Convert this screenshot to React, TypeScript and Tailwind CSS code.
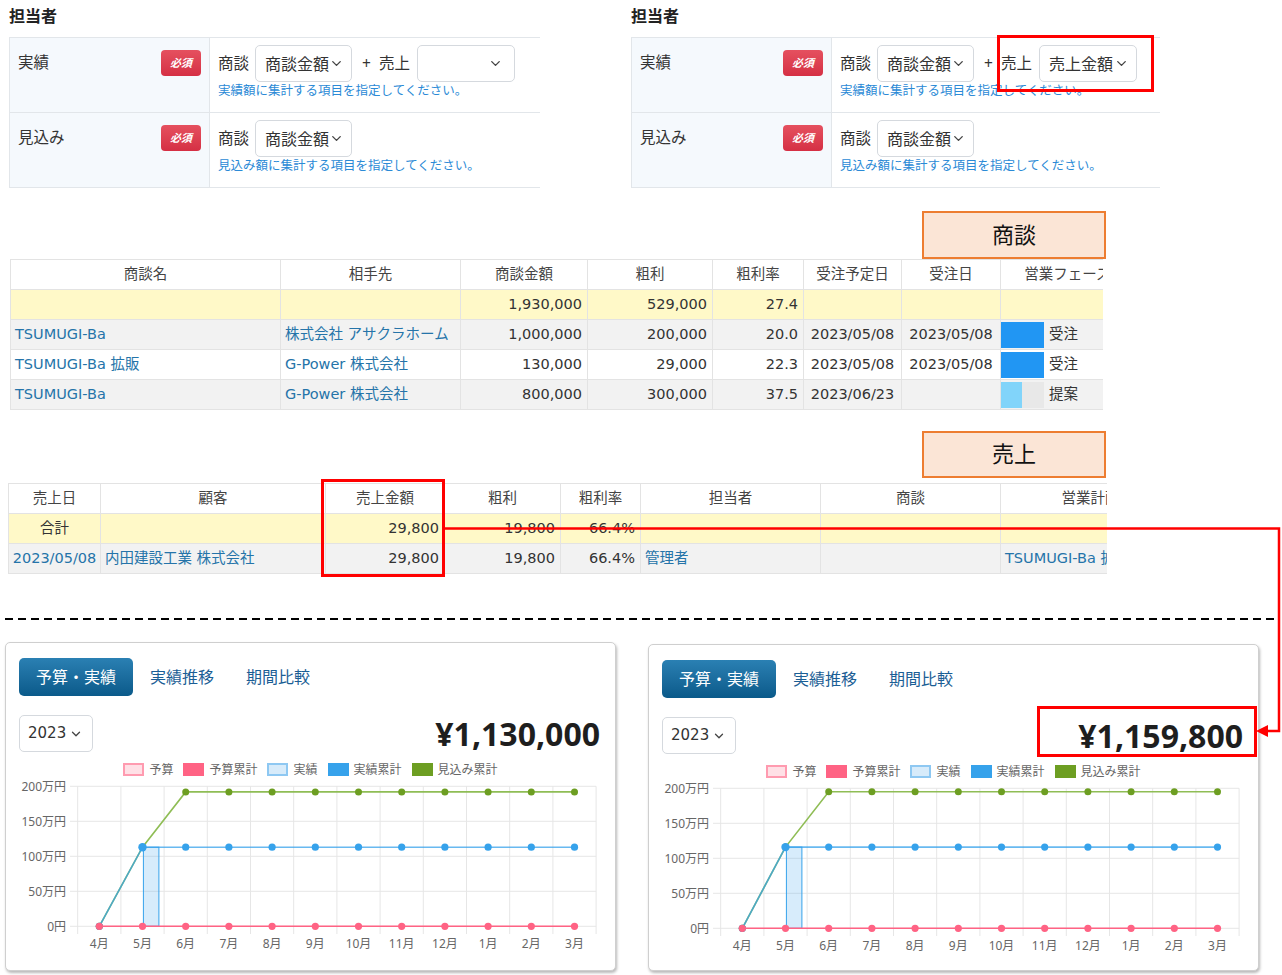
import React from 'react'
import { ChevronDown } from 'lucide-react'

type Cell = {
  text?: string
  link?: boolean
  align?: 'l' | 'r' | 'c'
  phase?: { label: string; full: boolean }
}

const alignClass = {
  l: 'justify-start pl-[4px]',
  r: 'justify-end pr-[5px]',
  c: 'justify-center',
}

const months = ['4月', '5月', '6月', '7月', '8月', '9月', '10月', '11月', '12月', '1月', '2月', '3月']

// ---------- 担当者 settings ----------

function Dropdown({ value, className }: { value?: string; className: string }) {
  return (
    <div
      className={`flex h-[37px] items-center rounded-[5px] border border-[#d5d9de] bg-white ${
        value ? 'justify-between pl-[9px] pr-[7px]' : 'justify-end pr-[11px]'
      } ${className}`}
    >
      {value && <span className="text-[16px] text-[#333]">{value}</span>}
      <ChevronDown size={15} strokeWidth={2.2} className="text-[#444]" />
    </div>
  )
}

function Required() {
  return (
    <span className="flex h-[26px] w-[40px] items-center justify-center rounded-[4px] bg-linear-to-b from-[#e5505f] to-[#d52f44] text-[11px] font-bold italic text-white">
      必須
    </span>
  )
}

function SettingRow({ label, help, children }: { label: string; help: string; children: React.ReactNode }) {
  return (
    <div className="flex h-[75px] border-b border-[#e2e6ea]">
      <div className="w-[200px] shrink-0 border-r border-[#e2e6ea] bg-[#f5f9fd] pl-[8px] pr-[8px] pt-[12px]">
        <div className="flex h-[26px] items-center justify-between">
          <span className="text-[15.5px] text-[#333]">{label}</span>
          <Required />
        </div>
      </div>
      <div className="flex-1 pl-[8px] pt-[7px]">
        <div className="flex h-[37px] items-center text-[15.5px] text-[#333]">{children}</div>
        <div className="mt-[1px] text-[12.5px] leading-[16px] text-[#2b8ad6]">{help}</div>
      </div>
    </div>
  )
}

function AssignPanel({ sales, className }: { sales?: string; className: string }) {
  return (
    <div className={className}>
      <div className="h-[20px] text-[16px] font-bold leading-[20px] text-[#222]">担当者</div>
      <div className="mt-[11px] border-l border-t border-[#e2e6ea]">
        <SettingRow label="実績" help="実績額に集計する項目を指定してください。">
          <span>商談</span>
          <Dropdown value="商談金額" className="ml-[6px] w-[97px]" />
          <span className="ml-[10px]">+</span>
          <span className="ml-[8px]">売上</span>
          <Dropdown value={sales} className="ml-[7px] w-[98px]" />
        </SettingRow>
        <SettingRow label="見込み" help="見込み額に集計する項目を指定してください。">
          <span>商談</span>
          <Dropdown value="商談金額" className="ml-[6px] w-[97px]" />
        </SettingRow>
      </div>
    </div>
  )
}

// ---------- tables ----------

function TagBox({ label, className }: { label: string; className: string }) {
  return (
    <div
      className={`flex w-[184px] items-center justify-center border-2 border-[#ed7d31] bg-[#fbe5d6] pb-[4px] font-['Noto_Sans_CJK_JP',sans-serif] text-[22px] text-[#111] ${className}`}
    >
      {label}
    </div>
  )
}

function DataTable({
  widths,
  header,
  rows,
  className,
}: {
  widths: string[]
  header: string[]
  rows: { bg: string; cells: Cell[] }[]
  className: string
}) {
  return (
    <div
      className={`overflow-hidden border-l border-t border-[#e3e3e3] font-['DejaVu_Sans','Noto_Sans_CJK_JP',sans-serif] text-[14.5px] ${className}`}
    >
      <div className="flex h-[30px] border-b border-[#e3e3e3] bg-white text-[#444]">
        {header.map((h, i) => (
          <div
            key={i}
            className={`flex shrink-0 items-center justify-center whitespace-nowrap border-r border-[#e3e3e3] ${widths[i]}`}
          >
            {h}
          </div>
        ))}
      </div>
      {rows.map((r, ri) => (
        <div key={ri} className={`flex h-[30px] border-b border-[#e3e3e3] ${r.bg}`}>
          {r.cells.map((c, i) => (
            <div
              key={i}
              className={`flex shrink-0 items-center overflow-hidden whitespace-nowrap border-r border-[#e3e3e3] ${
                c.phase ? 'pl-0' : alignClass[c.align ?? 'l']
              } ${widths[i]} ${c.link ? 'text-[#2574a9]' : 'text-[#333]'}`}
            >
              {c.phase ? (
                <div className="flex items-center">
                  <div className="h-[26px] w-[43px] bg-[#e8e8e8]">
                    <div className={c.phase.full ? 'h-full w-full bg-[#2196f3]' : 'h-full w-[21px] bg-[#81d4fa]'} />
                  </div>
                  <span className="ml-[5px] text-[#333]">{c.phase.label}</span>
                </div>
              ) : (
                c.text
              )}
            </div>
          ))}
        </div>
      ))}
    </div>
  )
}

const dealWidths = ['w-[270px]', 'w-[180px]', 'w-[127px]', 'w-[125px]', 'w-[91px]', 'w-[98px]', 'w-[99px]', 'w-[134px]']
const dealHeader = ['商談名', '相手先', '商談金額', '粗利', '粗利率', '受注予定日', '受注日', '営業フェーズ']
const dealRows = [
  {
    bg: 'bg-[#fff9c8]',
    cells: [{}, {}, { text: '1,930,000', align: 'r' }, { text: '529,000', align: 'r' }, { text: '27.4', align: 'r' }, {}, {}, {}] as Cell[],
  },
  {
    bg: 'bg-[#f2f2f2]',
    cells: [
      { text: 'TSUMUGI-Ba', link: true },
      { text: '株式会社 アサクラホーム', link: true },
      { text: '1,000,000', align: 'r' },
      { text: '200,000', align: 'r' },
      { text: '20.0', align: 'r' },
      { text: '2023/05/08', align: 'c' },
      { text: '2023/05/08', align: 'c' },
      { phase: { label: '受注', full: true } },
    ] as Cell[],
  },
  {
    bg: 'bg-white',
    cells: [
      { text: 'TSUMUGI-Ba 拡販', link: true },
      { text: 'G-Power 株式会社', link: true },
      { text: '130,000', align: 'r' },
      { text: '29,000', align: 'r' },
      { text: '22.3', align: 'r' },
      { text: '2023/05/08', align: 'c' },
      { text: '2023/05/08', align: 'c' },
      { phase: { label: '受注', full: true } },
    ] as Cell[],
  },
  {
    bg: 'bg-[#f2f2f2]',
    cells: [
      { text: 'TSUMUGI-Ba', link: true },
      { text: 'G-Power 株式会社', link: true },
      { text: '800,000', align: 'r' },
      { text: '300,000', align: 'r' },
      { text: '37.5', align: 'r' },
      { text: '2023/06/23', align: 'c' },
      {},
      { phase: { label: '提案', full: false } },
    ] as Cell[],
  },
]

const salesWidths = ['w-[92px]', 'w-[225px]', 'w-[119px]', 'w-[116px]', 'w-[80px]', 'w-[180px]', 'w-[180px]', 'w-[180px]']
const salesHeader = ['売上日', '顧客', '売上金額', '粗利', '粗利率', '担当者', '商談', '営業計画']
const salesRows = [
  {
    bg: 'bg-[#fff9c8]',
    cells: [
      { text: '合計', align: 'c' },
      {},
      { text: '29,800', align: 'r' },
      { text: '19,800', align: 'r' },
      { text: '66.4%', align: 'r' },
      {},
      {},
      {},
    ] as Cell[],
  },
  {
    bg: 'bg-[#f2f2f2]',
    cells: [
      { text: '2023/05/08', link: true, align: 'c' },
      { text: '内田建設工業 株式会社', link: true },
      { text: '29,800', align: 'r' },
      { text: '19,800', align: 'r' },
      { text: '66.4%', align: 'r' },
      { text: '管理者', link: true },
      {},
      { text: 'TSUMUGI-Ba 拡販', link: true },
    ] as Cell[],
  },
]

// ---------- chart card ----------

function Chart({ actual, forecast }: { actual: number; forecast: number }) {
  const x0 = 77.7
  const cw = 43.2
  const xr = x0 + cw * 12
  const cx = (i: number) => x0 + cw * (i + 0.5)
  const vy = (v: number) => 927.3 - v * 0.7
  const pink = months.map((_, i) => [cx(i), vy(0)])
  const blue = months.map((_, i) => [cx(i), vy(i === 0 ? 0 : actual)])
  const green = months.map((_, i) => [cx(i), vy(i === 0 ? 0 : i === 1 ? actual : forecast)])
  const pts = (a: number[][]) => a.map((p) => p.join(',')).join(' ')
  const font = 'Noto Sans, Noto Sans CJK JP, sans-serif'

  return (
    <svg width={609} height={175} viewBox="6 780 609 175" className="mt-[1px] block">
      {[0, 50, 100, 150, 200].map((v) => (
        <g key={v}>
          <line x1={70} x2={xr} y1={vy(v)} y2={vy(v)} stroke="#e6e6e6" strokeWidth={1} />
          <text x={66} y={vy(v) + 4.5} textAnchor="end" fontSize={12} fill="#666" fontFamily={font}>
            {v === 0 ? '0円' : `${v}万円`}
          </text>
        </g>
      ))}
      {Array.from({ length: 13 }).map((_, i) => (
        <line key={i} x1={x0 + cw * i} x2={x0 + cw * i} y1={vy(200)} y2={935} stroke="#e6e6e6" strokeWidth={1} />
      ))}
      {months.map((m, i) => (
        <text key={m} x={cx(i)} y={948.5} textAnchor="middle" fontSize={12} fill="#666" fontFamily={font}>
          {m}
        </text>
      ))}
      <rect
        x={cx(1) + 0.9}
        y={vy(actual)}
        width={15.5}
        height={vy(0) - vy(actual)}
        fill="rgba(54,162,235,0.2)"
        stroke="#36a2eb"
        strokeWidth={1}
      />
      <polyline points={pts(green)} fill="none" stroke="#8fbd55" strokeWidth={1.6} />
      {green.map((p, i) => (
        <circle key={i} cx={p[0]} cy={p[1]} r={3.5} fill="#6d9e22" />
      ))}
      <polyline points={pts(blue)} fill="none" stroke="#36a2eb" strokeOpacity={0.75} strokeWidth={1.6} />
      {blue.map((p, i) => (
        <circle key={i} cx={p[0]} cy={p[1]} r={i === 1 ? 4.2 : 3.6} fill="#36a2eb" />
      ))}
      <polyline points={pts(pink)} fill="none" stroke="#ff6384" strokeWidth={1.6} />
      {pink.map((p, i) => (
        <circle key={i} cx={p[0]} cy={p[1]} r={3.6} fill="#ff6384" />
      ))}
    </svg>
  )
}

const legend = [
  { label: '予算', sw: 'bg-[#ffe0e6] border-2 border-[#ff9bb0]' },
  { label: '予算累計', sw: 'bg-[#ff6384]' },
  { label: '実績', sw: 'bg-[#d7ebfa] border-2 border-[#8ec8f2]' },
  { label: '実績累計', sw: 'bg-[#36a2eb]' },
  { label: '見込み累計', sw: 'bg-[#6d9e22]' },
]

function BudgetCard({
  amount,
  actual,
  forecast,
  className,
}: {
  amount: string
  actual: number
  forecast: number
  className: string
}) {
  return (
    <div
      className={`w-[611px] rounded-[5px] border border-[#cfcfcf] bg-white pb-[14px] shadow-[1px_2px_3px_rgba(0,0,0,0.28)] ${className}`}
    >
      <div className="flex pl-[13px] pt-[15px] text-[16px]">
        <div className="flex h-[38px] items-center rounded-[5px] bg-linear-to-b from-[#2a80b3] to-[#0a5a8a] px-[17px] text-white">
          予算・実績
        </div>
        <div className="flex h-[38px] items-center px-[17px] text-[#1b5e95]">実績推移</div>
        <div className="flex h-[38px] items-center pl-[15px] text-[#1b5e95]">期間比較</div>
      </div>
      <div className="mt-[19px] flex h-[37px] items-center justify-between pl-[13px] pr-[15px]">
        <div className="flex h-[37px] w-[74px] items-center rounded-[5px] border border-[#d5d9de] pl-[8px] font-['DejaVu_Sans',sans-serif] text-[15px] text-[#333]">
          2023
          <ChevronDown size={14} strokeWidth={2.2} className="ml-[3px] text-[#444]" />
        </div>
        <div className="font-['Noto_Sans',sans-serif] text-[32px] font-bold leading-[37px] text-[#1e1e1e]">{amount}</div>
      </div>
      <div className="mt-[9px] flex h-[17px] items-center justify-center text-[12px] text-[#666]">
        {legend.map((l, i) => (
          <div key={l.label} className={`flex items-center ${i > 0 ? 'ml-[10px]' : ''}`}>
            <span className={`h-[13px] w-[21px] ${l.sw}`} />
            <span className="ml-[5px]">{l.label}</span>
          </div>
        ))}
      </div>
      <Chart actual={actual} forecast={forecast} />
    </div>
  )
}

// ---------- page ----------

export default function App() {
  return (
    <div className="relative h-[975px] w-[1282px] overflow-hidden bg-white font-['Noto_Sans','Noto_Sans_CJK_JP',sans-serif] text-[#333]">
      <div className="flex pl-[9px] pt-[6px]">
        <AssignPanel className="w-[531px]" />
        <AssignPanel sales="売上金額" className="ml-[91px] w-[529px]" />
      </div>

      <TagBox label="商談" className="ml-[922px] mt-[23px] h-[48px]" />
      <DataTable widths={dealWidths} header={dealHeader} rows={dealRows} className="ml-[10px] mt-0 w-[1093px]" />

      <TagBox label="売上" className="ml-[922px] mt-[21px] h-[47px]" />
      <DataTable widths={salesWidths} header={salesHeader} rows={salesRows} className="ml-[8px] mt-[5px] w-[1099px]" />

      <div className="ml-[5px] mt-[44px] h-[2px] w-[1270px] bg-[repeating-linear-gradient(90deg,#000_0px,#000_8px,transparent_8px,transparent_13px)]" />

      <div className="mt-[22px] flex pl-[5px]">
        <BudgetCard amount="¥1,130,000" actual={113} forecast={192} className="" />
        <BudgetCard amount="¥1,159,800" actual={116} forecast={195} className="ml-[32px] mt-[2px]" />
      </div>

      {/* annotations */}
      <div className="pointer-events-none absolute left-[997px] top-[35px] h-[57px] w-[157px] border-[3px] border-[#ff0000]" />
      <div className="pointer-events-none absolute left-[321px] top-[479px] h-[98px] w-[124px] border-[3px] border-[#ff0000]" />
      <div className="pointer-events-none absolute left-[1037px] top-[706px] h-[51px] w-[220px] border-[3px] border-[#ff0000]" />
      <svg className="pointer-events-none absolute left-0 top-0" width={1282} height={975}>
        <path d="M445 528.5 H1279 V731 H1266" fill="none" stroke="#ff0000" strokeWidth={2.5} />
        <polygon points="1256,731 1268,725 1268,737" fill="#ff0000" />
      </svg>
    </div>
  )
}
